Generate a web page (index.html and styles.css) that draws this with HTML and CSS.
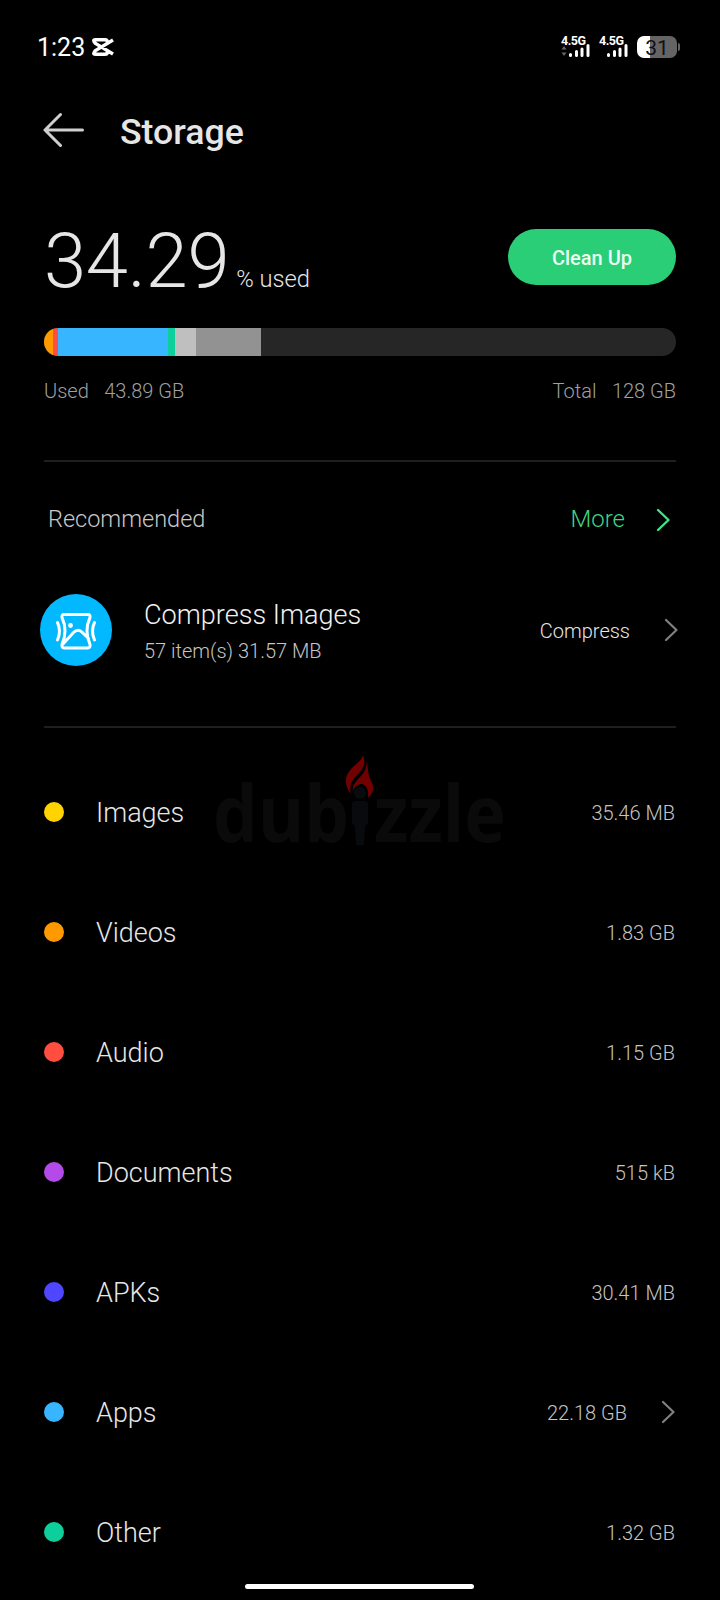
FILE: index.html
```html
<!DOCTYPE html>
<html lang="en">
<head>
<meta charset="utf-8">
<title>Storage</title>
<link rel="stylesheet" href="styles.css">
</head>
<body>
<div class="screen">
  <div class="status">
    <span class="clock">1:23</span>
    <svg class="app-mark" width="24" height="20" viewBox="0 0 24 20" fill="none" stroke="#fff" stroke-width="3.4"><path d="M23 3 5.500 13.500Q2 17.300 5.500 17.300H15Q17.500 17.300 17.500 14.500M23 17 5.500 6.500Q2 2.700 5.500 2.700H15Q17.500 2.700 17.500 5.500"/></svg>
    <div class="signal">
      <span class="net">4.5G</span>
      <svg width="29" height="14" viewBox="0 0 29 14"><path fill="#666" d="m3 2 2.500 3.500h-5zM3 12l2.500-3.500h-5z"/><path stroke="#fff" stroke-width="3" stroke-linecap="round" d="M9.500 10.500v1M15.500 7.500v4M21 5v6.500M27 1.500v10"/></svg>
    </div>
    <div class="signal second">
      <span class="net">4.5G</span>
      <svg width="29" height="14" viewBox="0 0 29 14"><path stroke="#fff" stroke-width="3" stroke-linecap="round" d="M9.500 10.500v1M15.500 7.500v4M21 5v6.500M27 1.500v10"/></svg>
    </div>
    <div class="battery">31</div><i class="battery-tip"></i>
  </div>

  <header class="header">
    <svg width="42" height="36" viewBox="0 0 42 36" fill="none" stroke="#cfcfcf" stroke-width="3" stroke-linecap="round" stroke-linejoin="round"><path d="M39.500 18H2M17.500 2.500 2 18l15.500 15.500"/></svg>
    <h1 class="title">Storage</h1>
  </header>

  <section class="summary">
    <div class="usage">
      <span class="percent">34.29</span><span class="unit">% used</span>
      <button class="clean">Clean Up</button>
    </div>
    <div class="bar">
      <i class="orange" style="width:9px"></i><i class="red" style="width:5px"></i><i class="blue" style="width:110px"></i><i class="green" style="width:7px"></i><i class="silver" style="width:21px"></i><i class="gray" style="width:64.5px"></i>
    </div>
    <div class="totals"><span>Used</span><span class="amount">43.89 GB</span><span class="total">Total</span><span class="amount">128 GB</span></div>
  </section>

  <section class="recommended">
    <div class="rec-head">
      <span class="rec-title">Recommended</span>
      <span class="more">More</span>
      <svg class="chev green-chev" width="15" height="24" viewBox="0 0 15 24"><path d="m2 2 10.500 10L2 22"/></svg>
    </div>
    <div class="compress">
      <svg width="72" height="72" viewBox="0 0 72 72" fill="none" stroke="#fff" stroke-width="3" stroke-linecap="round" stroke-linejoin="round"><circle cx="36" cy="36" r="36" fill="#02b8fe" stroke="none"/><path d="M24 20.500h24q2.500 0 2 3-6 13 0 27 .500 3.500-2 3.500h-24q-2.500 0-2-3.500 6-14 0-27-.500-3 2-3ZM23 50l10.500-11.500q4.500-4.500 9 0l6 6"/><path d="M17.500 28.500q4 8.500 0 17.500M54.500 28.500q-4 8.500 0 17.500"/><circle cx="30.500" cy="31.500" r="2.400" fill="#fff" stroke="none"/></svg>
      <div class="task"><div class="task-name">Compress Images</div><div class="task-info">57 item(s) 31.57 MB</div></div>
      <span class="action">Compress</span>
      <svg class="chev" width="15" height="24" viewBox="0 0 15 24"><path d="m2 2 10.500 10L2 22"/></svg>
    </div>
  </section>

  <ul class="list">
    <li><i class="dot yellow"></i><span>Images</span><b>35.46 MB</b></li>
    <li><i class="dot orange"></i><span>Videos</span><b>1.83 GB</b></li>
    <li><i class="dot red"></i><span>Audio</span><b>1.15 GB</b></li>
    <li><i class="dot purple"></i><span>Documents</span><b>515 kB</b></li>
    <li><i class="dot indigo"></i><span>APKs</span><b>30.41 MB</b></li>
    <li><i class="dot blue"></i><span>Apps</span><b>22.18 GB</b><svg class="chev" width="15" height="24" viewBox="0 0 15 24"><path d="m2 2 10.500 10L2 22"/></svg></li>
    <li><i class="dot green"></i><span>Other</span><b>1.32 GB</b></li>
  </ul>

  <div class="watermark">
    <svg width="340" height="130" viewBox="0 0 340 130">
      <g class="word"><text x="13" y="91" textLength="136" lengthAdjust="spacingAndGlyphs">dub</text><text x="174" y="91" textLength="132" lengthAdjust="spacingAndGlyphs">zzle</text></g>
      <circle cx="160" cy="42" r="6" fill="#080c0f"/><path fill="#080b0e" d="M152 54q0-4 4-4h8q4 0 4 4v18l-3 4-1 18h-8l-1-18-3-4z"/>
      <path fill="#710000" d="M163 4c3 8 1 13-5 19-7 7-9 12-7 20-8-10-6-19 1-26 6-6 10-8 11-13Z"/>
      <path fill="#710000" d="M167 10c-1 8-2 11-7 16-5 5-8 9-7 14 5-12 17-8 15 7 5-4 7-11 3-17-3-6-3-12-4-20Z"/>
    </svg>
  </div>
  <div class="home"></div>
</div>
</body>
</html>
```
FILE: styles.css
```css
* { box-sizing: border-box; }
body { margin: 0; background: #000; color: #e6e6e6; font-family: Roboto, "Liberation Sans", sans-serif; font-weight: 300; }
.screen { position: relative; width: 720px; height: 1600px; overflow: hidden; background: #000; }
.status { display: flex; align-items: center; height: 94px; padding: 0 41px 0 37px; color: #fff; }
.clock { font-size: 25px; font-weight: 400; width: 53px; white-space: nowrap; }
.app-mark { display: block; }
.signal { margin-left: auto; width: 29px; height: 22px; display: flex; flex-direction: column; justify-content: space-between; }
.second { margin-left: 9px; }
.net { height: 8px; line-height: 10px; font-size: 12.5px; font-weight: 700; letter-spacing: -.5px; }
.battery { margin-left: 9px; width: 40px; height: 22px; border-radius: 7px; background: linear-gradient(90deg, #fff 13px, #646464 13px); color: #111; font-size: 21px; font-weight: 400; line-height: 24px; text-align: center; }
.battery-tip { width: 2px; height: 8px; margin-right: -1px; margin-left: 1px; border-radius: 0 2px 2px 0; background: #646464; }
.header { display: flex; align-items: center; height: 72px; padding-left: 43px; }
.title { margin: 3px 0 0 35px; font-size: 35.7px; line-height: 42px; font-weight: 500; }
.summary { height: 296px; margin: 0 44px; padding-top: 63px; border-bottom: 2px solid #1f1f1f; }
.usage { display: flex; align-items: baseline; height: 99px; }
.percent { font-size: 76px; line-height: 58px; padding-top: 3px; letter-spacing: -.3px; }
.unit { font-size: 23.7px; margin-left: 7px; }
.clean { align-self: flex-start; margin-left: auto; width: 168px; height: 56px; padding: 2px 0 0; border: 0; border-radius: 28px; background: #29ce76; color: #e9fff2; font: 500 20px Roboto, sans-serif; }
.bar { display: flex; height: 28px; border-radius: 14px; overflow: hidden; background: #262626; }
.orange { background: #ff9900; }
.red { background: #fd4e40; }
.blue { background: #37b6ff; }
.green { background: #0dcf9b; }
.silver { background: #bfbfbf; }
.gray { background: #929292; }
.totals { display: flex; margin-top: 23px; font-size: 20px; line-height: 24px; color: #a0a0a0; }
.amount { margin-left: 15.5px; }
.total { margin-left: auto; }
.recommended { height: 266px; margin: 0 44px; border-bottom: 2px solid #1f1f1f; }
.rec-head { display: flex; align-items: center; height: 116px; padding: 0 5px 0 4px; font-size: 24px; color: #c8c8c8; }
.rec-title, .more { margin-top: -2px; }
.rec-title { font-size: 23.5px; }
.more { margin-left: auto; color: #3fd582; }
.chev { fill: none; stroke: #808080; stroke-width: 2.2; stroke-linecap: round; stroke-linejoin: round; }
.rec-head .chev { margin-left: 31px; stroke: #3fe58b; stroke-width: 2.4; }
.compress { display: flex; align-items: center; height: 72px; margin: 16px -3px 0 -4px; }
.task { margin-left: 32px; }
.task-name { font-size: 27.1px; line-height: 36px; color: #f0f0f0; }
.task-info { font-size: 20px; line-height: 24px; margin-top: 6px; color: #c4c4c4; }
.action { margin: 1px 34px 0 auto; font-size: 20px; }
.list { list-style: none; margin: 24px 45px 0 44px; padding: 0; }
.list li { display: flex; align-items: center; height: 120px; }
.dot { width: 20px; height: 20px; border-radius: 50%; }
.yellow { background: #ffd300; }
.purple { background: #b44be8; }
.indigo { background: #4f46ff; }
.list span { margin-left: 32px; font-size: 27px; padding-top: 2px; }
.list b { margin-left: auto; font-size: 20px; font-weight: 300; padding-top: 1px; color: #c4c4c4; }
.list .chev { margin: 0 -1px 0 34px; }
.watermark { position: absolute; left: 200px; top: 751px; }
.word { fill: #0a0a0a; font: 700 78px "Open Sans", sans-serif; }
.home { position: absolute; left: 245px; top: 1584px; width: 229px; height: 5px; border-radius: 3px; background: #fff; }
```
